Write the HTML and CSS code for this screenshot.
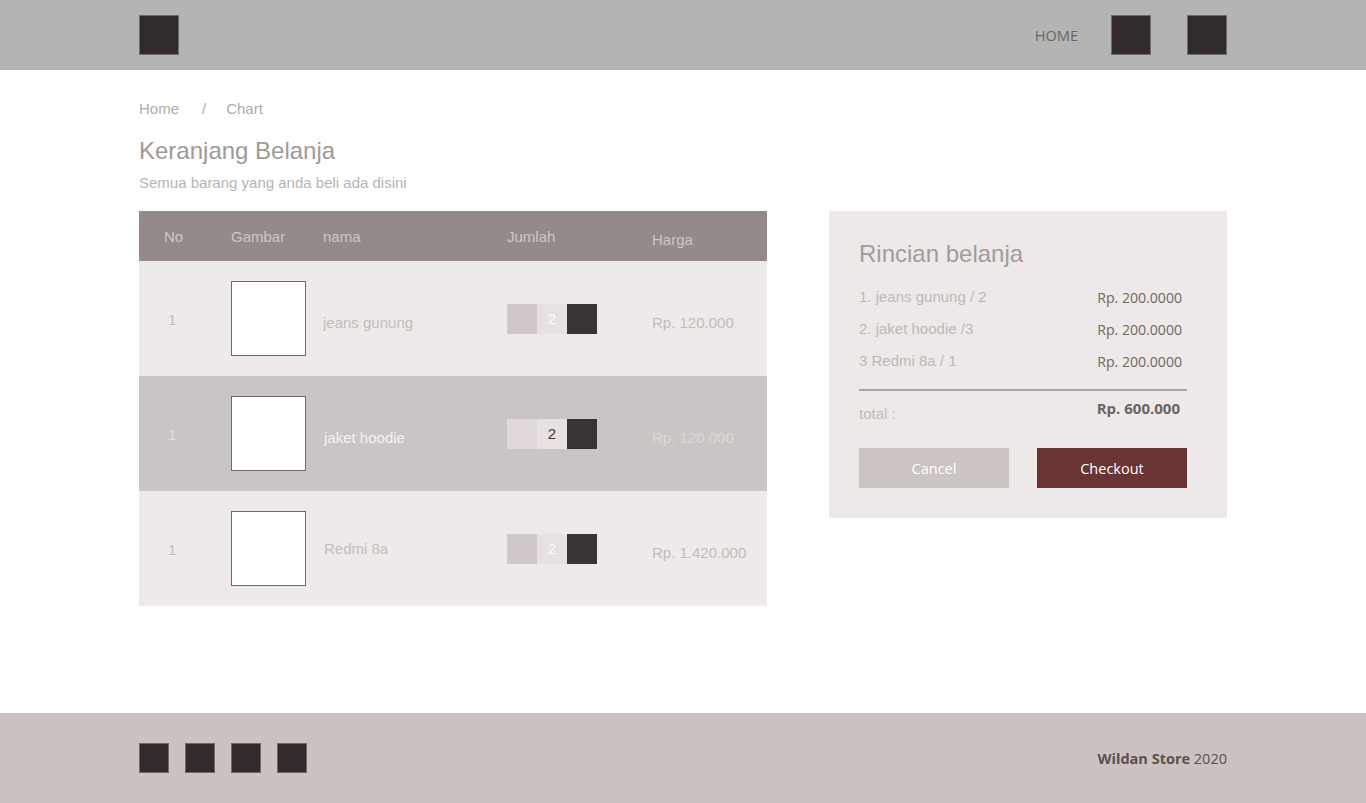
FILE: index.html
```html
<!DOCTYPE html>
<html lang="id">
<head>
<meta charset="utf-8">
<title>Keranjang Belanja</title>
<link rel="stylesheet" href="styles.css">
</head>
<body>
<header class="topbar">
  <div class="wrap topbar-inner">
    <div class="sq sq-40"></div>
    <nav class="nav">
      <span class="nav-link">HOME</span>
      <div class="sq sq-40"></div>
      <div class="sq sq-40"></div>
    </nav>
  </div>
</header>

<main class="main">
  <div class="wrap">
    <div class="crumbs"><span>Home</span><span class="sep">/</span><span>Chart</span></div>
    <h1 class="title">Keranjang Belanja</h1>
    <p class="subtitle">Semua barang yang anda beli ada disini</p>

    <div class="content">
      <section class="cart">
        <div class="row head">
          <div class="c-no">No</div>
          <div class="c-img">Gambar</div>
          <div class="c-name">nama</div>
          <div class="c-qty">Jumlah</div>
          <div class="c-price low">Harga</div>
        </div>
        <div class="row item">
          <div class="c-no">1</div>
          <div class="c-img"><div class="thumb"></div></div>
          <div class="c-name low">jeans gunung</div>
          <div class="c-qty"><div class="qty"><span class="q-a"></span><span class="q-b">2</span><span class="q-c"></span></div></div>
          <div class="c-price low">Rp. 120.000</div>
        </div>
        <div class="row item alt">
          <div class="c-no">1</div>
          <div class="c-img"><div class="thumb"></div></div>
          <div class="c-name low shift">jaket hoodie</div>
          <div class="c-qty"><div class="qty"><span class="q-a"></span><span class="q-b">2</span><span class="q-c"></span></div></div>
          <div class="c-price low">Rp. 120.000</div>
        </div>
        <div class="row item">
          <div class="c-no">1</div>
          <div class="c-img"><div class="thumb"></div></div>
          <div class="c-name shift">Redmi 8a</div>
          <div class="c-qty"><div class="qty"><span class="q-a"></span><span class="q-b">2</span><span class="q-c"></span></div></div>
          <div class="c-price lower">Rp. 1.420.000</div>
        </div>
      </section>

      <aside class="summary">
        <h2 class="sum-title">Rincian belanja</h2>
        <ul class="sum-list">
          <li><span>1. jeans gunung / 2</span><span class="amt">Rp. 200.0000</span></li>
          <li><span>2. jaket hoodie /3</span><span class="amt">Rp. 200.0000</span></li>
          <li><span>3 Redmi 8a / 1</span><span class="amt">Rp. 200.0000</span></li>
        </ul>
        <div class="sum-total"><span class="lbl">total :</span><span class="tot">Rp. 600.000</span></div>
        <div class="actions">
          <button class="btn btn-cancel">Cancel</button>
          <button class="btn btn-checkout">Checkout</button>
        </div>
      </aside>
    </div>
  </div>
</main>

<footer class="footer">
  <div class="wrap footer-inner">
    <div class="socials">
      <div class="sq sq-30"></div>
      <div class="sq sq-30"></div>
      <div class="sq sq-30"></div>
      <div class="sq sq-30"></div>
    </div>
    <div class="copy"><b>Wildan Store</b> 2020</div>
  </div>
</footer>
</body>
</html>
```

FILE: styles.css
```css
* { box-sizing: border-box; }
html, body { margin: 0; padding: 0; }
body {
  font-family: "Liberation Sans", Arial, sans-serif;
  background: #ffffff;
  color: #aaa;
}
.wrap { width: 1088px; margin: 0 auto; }

.sq { background: #312b2b; border: 1px solid #6e6a6a; }
.sq-40 { width: 40px; height: 40px; }
.sq-30 { width: 30px; height: 30px; }

.topbar { background: #b4b4b4; height: 70px; }
.topbar-inner { height: 70px; display: flex; align-items: center; justify-content: space-between; }
.nav { display: flex; align-items: center; gap: 36px; }
.nav-link { font-family: "Open Sans", "Noto Sans", sans-serif; font-size: 14.6px; color: #6a6666; margin-right: -3px; }

.main { min-height: 643px; padding-top: 30px; }
.crumbs { font-size: 15px; color: #b0acac; line-height: 17px; display: flex; gap: 0; }
.crumbs .sep { margin: 0 20px 0 23px; }
.title { margin: 20px 0 0; font-weight: normal; font-size: 24px; line-height: 28px; color: #a09999; }
.subtitle { margin: 9px 0 0; font-size: 15px; line-height: 18px; color: #b8b4b4; }

.content { display: flex; align-items: flex-start; gap: 62px; margin-top: 19px; }

.cart { width: 628px; }
.row { display: grid; grid-template-columns: 92px 92px 184px 145px 1fr; align-items: center; }
.row.head { height: 50px; background: #948a89; color: #cdc7c6; font-size: 15px; }
.row.head .c-no { padding-left: 25px; }
.row.head .c-price.low { margin-top: 7px; }
.row.item { height: 115px; background: #edeae9; color: #c2bdbd; font-size: 15px; }
.row.item .c-no { padding-left: 29px; margin-top: 1px; }
.row.item .low { margin-top: 8px; }
.row.item .lower { margin-top: 8px; }
.row.item .c-name.shift { padding-left: 1px; }
.row.item.alt { background: #c9c5c4; }
.row.item.alt .c-name { color: #f4f2f2; }
.row.item.alt .c-price { color: #dcd7d7; }
.row.item.alt .c-no { color: #e2dede; }
.thumb { width: 75px; height: 75px; background: #fff; border: 1px solid #6e6a6a; margin-top: 0; }

.qty { display: flex; height: 30px; }
.qty span { width: 30px; height: 30px; display: flex; align-items: center; justify-content: center; font-size: 15px; }
.q-a { background: #d0c8c8; }
.q-b { background: #e8e1e1; color: #fdfbfb; }
.q-c { background: #383434; }
.row.item.alt .q-a { background: #e1d9d9; }
.row.item.alt .q-b { color: #4a3838; }

.summary { width: 398px; height: 307px; background: #ede9e8; padding: 29px 40px 0 30px; }
.sum-title { margin: 0; font-weight: normal; font-size: 24px; line-height: 28px; color: #a29c9c; }
.sum-list { list-style: none; margin: 20px 0 0; padding: 0; }
.sum-list li { display: flex; justify-content: space-between; height: 32px; font-size: 15px; color: #bdb8b8; line-height: 17px; }
.sum-list .amt { font-family: "Open Sans", "Noto Sans", sans-serif; font-size: 14.1px; color: #6e6868; margin-top: 1px; padding-right: 5px; }
.sum-total { border-top: 2px solid #aaa5a5; margin-top: 5px; display: flex; justify-content: space-between; padding-top: 7px; height: 59px; }
.sum-total .lbl { font-size: 15px; color: #c0bbbb; margin-top: 7px; }
.sum-total .tot { font-family: "Open Sans", "Noto Sans", sans-serif; font-weight: bold; font-size: 15px; color: #6a6464; padding-right: 7px; }
.actions { display: flex; justify-content: space-between; }
.btn { width: 150px; height: 40px; border: 0; border-radius: 0; color: #fff; font-family: "Open Sans", "Noto Sans", sans-serif; font-size: 14.5px; cursor: pointer; }
.btn-cancel { background: #cbc4c3; }
.btn-checkout { background: #6a3434; }

.footer { background: #cdc2c2; height: 90px; }
.footer-inner { height: 90px; display: flex; align-items: center; justify-content: space-between; }
.socials { display: flex; gap: 16px; }
.copy { font-family: "Open Sans", "Noto Sans", sans-serif; font-size: 14.5px; color: #5a5151; }
.copy b { font-weight: bold; }
```
